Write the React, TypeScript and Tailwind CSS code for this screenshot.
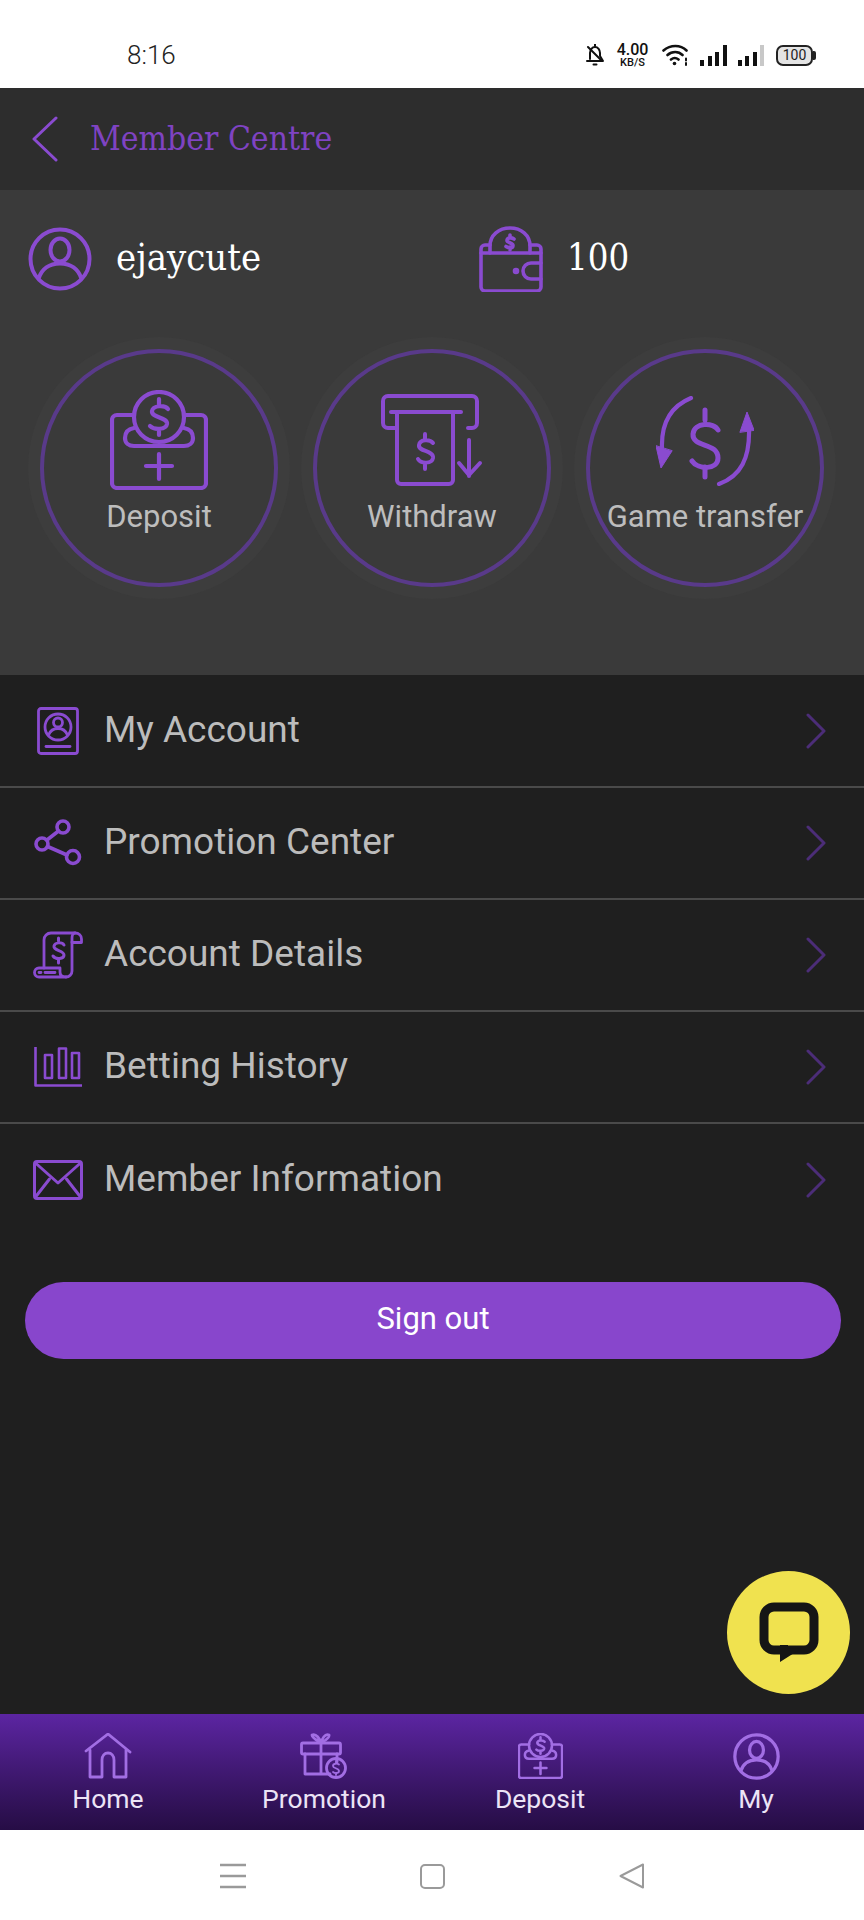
import React from "react";

const P = "#8a4bd0";
const S = { fill: "none", stroke: P, strokeWidth: 3, strokeLinecap: "round" as const, strokeLinejoin: "round" as const };

function Avatar({ size = 64, sw = 4, color = P }: { size?: number; sw?: number; color?: string }) {
  return (
    <svg width={size} height={size} viewBox="0 0 64 64" fill="none" stroke={color} strokeWidth={sw}>
      <circle cx="32" cy="32" r="29.5" />
      <ellipse cx="32" cy="23" rx="9.5" ry="11.5" />
      <path d="M10.5 52c3-10 11-15.5 21.5-15.5S50.5 42 53.5 52" />
    </svg>
  );
}

function Wallet() {
  return (
    <svg width="64" height="66" viewBox="0 0 64 66" {...S} strokeWidth={3.6}>
      <path d="M6 19h5M51 19h7a4 4 0 0 1 4 4v38a4 4 0 0 1-4 4H6a4 4 0 0 1-4-4V23a4 4 0 0 1 4-4" />
      <path d="M11 27V20C11 9 20 2 31 2s20 7 20 18v7" />
      <path d="M2 27h60" />
      <path d="M62 37H52a8 8 0 0 0 0 16h10" />
      <circle cx="37" cy="45" r="1.5" fill={P} />
      <path d="M35 13c-3-2-7-1-7 1.500s6 2 6 5-4 3-7 1M31 9v3M31 21v3" />
    </svg>
  );
}

function DepositIcon({ w = 98, h = 100, sw = 4.2, color = P }: { w?: number; h?: number; sw?: number; color?: string }) {
  return (
    <svg width={w} height={h} viewBox="0 0 98 100" {...S} stroke={color} strokeWidth={sw}>
      <path d="M24 25H7a5 5 0 0 0-5 5v63a5 5 0 0 0 5 5h84a5 5 0 0 0 5-5V30a5 5 0 0 0-5-5H74" />
      <circle cx="49" cy="27" r="25" />
      <path d="M24 38c-6 1-9 5-9 10 0 5 4 8 9 8h50c5 0 9-3 9-8 0-5-3-9-9-10" />
      <path d="M58 19c-3-4-15-4-16 2-1 7 16 6 15 13-1 6-13 6-17 2M49 9v5M49 39v6" />
      <path d="M49 64v25M36 76h26" />
    </svg>
  );
}

function WithdrawIcon() {
  return (
    <svg width="102" height="92" viewBox="0 0 102 92" {...S} strokeWidth={4}>
      <path d="M16 34H7a5 5 0 0 1-5-5V7a5 5 0 0 1 5-5h84a5 5 0 0 1 5 5v22a5 5 0 0 1-5 5h-4" />
      <path d="M10 18h70" />
      <path d="M16 18v68a4 4 0 0 0 4 4h48a4 4 0 0 0 4-4V18" />
      <path d="M52 49c-3-4-13-4-14 2-1 7 15 5 14 13-1 6-12 6-15 1M44 40v5M44 69v6" />
      <path d="M88 46v36M78 69l10 12 11-12" />
    </svg>
  );
}

function TransferIcon() {
  return (
    <svg width="98" height="90" viewBox="0 0 98 90" {...S} strokeWidth={4.2}>
      <path d="M35 2C18 9 5 24 6 52" />
      <path d="M0 50l5 22 11-17z" fill={P} strokeWidth={1} />
      <path d="M63 88c22-8 31-26 30-56" />
      <path d="M84 36l7-20 7 18z" fill={P} strokeWidth={1} />
      <path d="M62 34c-4-8-24-8-25 4-1 14 25 8 25 24 0 12-20 12-26 3" strokeWidth={5} />
      <path d="M49 14v10M49 71v10" strokeWidth={5} />
    </svg>
  );
}

function PassportIcon() {
  return (
    <svg width="42" height="48" viewBox="0 0 42 48" {...S} strokeWidth={2.8}>
      <rect x="1.500" y="1.500" width="39" height="45" rx="2.500" />
      <circle cx="21" cy="20" r="13" />
      <circle cx="21" cy="15.500" r="4.500" />
      <path d="M11.500 28c2-5 5.500-6.500 9.500-6.500s7.500 1.500 9.500 6.500" />
      <path d="M9 39.500h24" />
    </svg>
  );
}

function ShareIcon() {
  return (
    <svg width="48" height="48" viewBox="0 0 48 48" {...S} strokeWidth={3.6}>
      <circle cx="29" cy="8" r="6" />
      <circle cx="8" cy="25" r="6" />
      <circle cx="39" cy="38" r="6.500" />
      <path d="M24.500 12L13 21M13.500 27.500L33 36" />
    </svg>
  );
}

function ScrollIcon() {
  return (
    <svg width="50" height="48" viewBox="0 0 50 48" {...S} strokeWidth={2.8}>
      <path d="M11 37V9a7 7 0 0 1 7-7h24" />
      <path d="M42 2c4 0 6.500 2.500 6.500 6v3.500H39V7c0-3 1-5 3-5z" />
      <path d="M39 11v29a6 6 0 0 1-6 6" />
      <path d="M6 37h21v4c0 3 2 5 6 5H6a4.500 4.500 0 0 1 0-9z" />
      <path d="M6 41.500h2M12 41.500h10" />
      <path d="M31 14c-2-3-9-3-10 1-1 5 10 4 10 9 0 4-8 5-11 1M25.500 7v3M25.500 28v4" strokeWidth={3} />
    </svg>
  );
}

function BarsIcon() {
  return (
    <svg width="48" height="40" viewBox="0 0 48 40" {...S} strokeWidth={2.6} strokeLinecap="butt">
      <path d="M1.500 0v38.500H48" />
      <rect x="11" y="8" width="7" height="23" />
      <rect x="25" y="1.500" width="7" height="29.500" />
      <rect x="38" y="6" width="7" height="25" />
    </svg>
  );
}

function MailIcon() {
  return (
    <svg width="50" height="40" viewBox="0 0 50 40" {...S} strokeWidth={3}>
      <rect x="1.500" y="1.500" width="47" height="37" rx="2.500" />
      <path d="M2.500 3L25 23 47.500 3" />
      <path d="M2.500 37l14-18M47.500 37l-14-18" />
    </svg>
  );
}

function Chevron() {
  return (
    <svg width="22" height="36" viewBox="0 0 22 36" fill="none" stroke="#4c2d78" strokeWidth="3" strokeLinecap="round" strokeLinejoin="round">
      <path d="M3 2l16 16L3 34" />
    </svg>
  );
}

const NV = "#a26ee4";

function HomeIcon() {
  return (
    <svg width="48" height="46" viewBox="0 0 48 46" fill="none" stroke={NV} strokeWidth="2.800" strokeLinecap="round" strokeLinejoin="round">
      <path d="M2 18L24 1l22 18" />
      <path d="M6 17v27h12V27c0-4 2.500-7 6-7s6 3 6 7v17h12V17" />
    </svg>
  );
}

function GiftIcon() {
  return (
    <svg width="48" height="46" viewBox="0 0 48 46" fill="none" stroke={NV} strokeWidth="2.800" strokeLinecap="round" strokeLinejoin="round">
      <rect x="1.500" y="10" width="39" height="11" rx="1.500" />
      <path d="M5 21v20h25M37 21v8M21 10v31" />
      <path d="M21 10c-3-2-9-5-9-8 4-2 8 4 9 8zM21 10c3-2 9-5 8-8-4-2-7 4-8 8z" />
      <circle cx="36" cy="35" r="9.500" />
      <path d="M39 31.500c-2-1.500-6-1-6 1.500s6 2 6 5c0 2.500-4 2.500-6 1M36 28v2M36 40v2" strokeWidth="1.800" />
    </svg>
  );
}

function MenuNav() {
  return (
    <svg width="26" height="26" viewBox="0 0 26 26" fill="none" stroke="#9a9a9a" strokeWidth="2.400">
      <path d="M0 2h26M0 13h26M0 24h26" />
    </svg>
  );
}

function StatusIcons() {
  return (
    <div className="flex items-center h-[24px]">
      <svg width="20" height="22" viewBox="0 0 20 22" fill="none" stroke="#111" strokeWidth="2" strokeLinecap="round" strokeLinejoin="round">
        <path d="M5 15V9c0-3 2-6 5-6s5 3 5 6v3l3 5H2" />
        <path d="M10 0v2M3 3l14 14M8.500 20.500h3" />
      </svg>
      <div className="ml-[11px] w-[33px] flex flex-col items-center text-[#111] font-['Roboto',sans-serif] leading-none">
        <span className="text-[16px] leading-[14px] font-medium">4.00</span>
        <span className="text-[11px] leading-[11px] font-medium">KB/S</span>
      </div>
      <svg className="ml-[13px]" width="27" height="22" viewBox="0 0 27 22" fill="none" stroke="#111" strokeWidth="2.600" strokeLinecap="round">
        <path d="M1.500 6.500c7-6 17-6 23 0M5.500 11c4.500-4 11-4 15 0M9 15.500c2.500-2 5-2 7.500 0" />
        <circle cx="12.500" cy="19.500" r="1.800" fill="#111" stroke="none" />
        <path d="M24 14.500v2M24 19v2" strokeWidth="2" />
      </svg>
      <div className="ml-[11px] flex items-end gap-[3.500px] h-[21px]">
        <div className="w-[4px] h-[6px] bg-[#111]" />
        <div className="w-[4px] h-[10px] bg-[#111]" />
        <div className="w-[4px] h-[14px] bg-[#111]" />
        <div className="w-[4px] h-[21px] bg-[#111]" />
      </div>
      <div className="ml-[11px] flex items-end gap-[3.500px] h-[21px]">
        <div className="w-[4px] h-[6px] bg-[#111]" />
        <div className="w-[4px] h-[10px] bg-[#111]" />
        <div className="w-[4px] h-[14px] bg-[#111]" />
        <div className="w-[4px] h-[21px] bg-[#c8c8c8]" />
      </div>
      <div className="ml-[12px] flex items-center">
        <div className="w-[37px] h-[21px] rounded-[7px] border-2 border-[#222] bg-[#e4e4e4] flex items-center justify-center text-[14px] text-[#222] font-['Roboto',sans-serif] leading-none">
          100
        </div>
        <div className="w-[3px] h-[9px] bg-[#222] rounded-r-[2px]" />
      </div>
    </div>
  );
}

function Circle({ label, children, pb }: { label: string; children: React.ReactNode; pb: string }) {
  return (
    <div className="w-[262px] h-[262px] shrink-0 rounded-full bg-[#3d3d3d] p-[12px]">
      <div className="w-full h-full rounded-full bg-[#3a3a3a] border-[4px] border-[#593a8a] flex flex-col items-center">
        <div className={`h-[147px] flex items-end ${pb}`}>{children}</div>
        <div className="text-[31px] leading-[34px] text-[#bdbdbd] font-['Roboto',sans-serif] whitespace-nowrap">{label}</div>
      </div>
    </div>
  );
}

const rows: [string, React.ReactNode][] = [
  ["My Account", <PassportIcon />],
  ["Promotion Center", <ShareIcon />],
  ["Account Details", <ScrollIcon />],
  ["Betting History", <BarsIcon />],
  ["Member Information", <MailIcon />],
];

function Row({ label, icon, last }: { label: string; icon: React.ReactNode; last: boolean }) {
  return (
    <div className={`h-[112px] flex items-center pl-[33px] pr-[37px] ${last ? "" : "border-b-2 border-[#4a4a4a]"}`}>
      <div className="w-[50px] h-[50px] flex items-center justify-center">{icon}</div>
      <div className="ml-[21px] pb-[2px] flex-1 text-[37px] leading-[44px] text-[#bcbcbc] font-['Roboto',sans-serif]">{label}</div>
      <Chevron />
    </div>
  );
}

function NavItem({ label, children }: { label: string; children: React.ReactNode }) {
  return (
    <div className="flex-1 flex flex-col items-center">
      <div className="h-[46px] flex items-center justify-center">{children}</div>
      <div className="mt-[4px] text-[26.500px] leading-[32px] text-[#ece4f6] font-['Roboto',sans-serif]">{label}</div>
    </div>
  );
}

export default function App() {
  return (
    <div className="relative w-[864px] h-[1920px] flex flex-col bg-white overflow-hidden">
      <div className="h-[88px] shrink-0 bg-white flex items-center justify-between pl-[127px] pr-[48px] pt-[22px]">
        <div className="text-[26px] leading-[30px] text-[#222] font-['Roboto',sans-serif] font-light">8:16</div>
        <StatusIcons />
      </div>

      <div className="h-[102px] shrink-0 bg-[#2d2d2d] flex items-center pl-[32px]">
        <svg width="26" height="46" viewBox="0 0 26 46" fill="none" stroke={P} strokeWidth="3" strokeLinecap="round" strokeLinejoin="round">
          <path d="M24 2L2 23l22 21" />
        </svg>
        <div className="ml-[32px] text-[33px] leading-[40px] text-[#7f43c2] font-['DejaVu_Serif',serif] origin-left scale-x-[0.91] whitespace-nowrap">Member Centre</div>
      </div>

      <div className="h-[485px] shrink-0 bg-[#3a3a3a]">
        <div className="flex items-center pl-[28px] pt-[36px]">
          <div className="flex items-center w-[451px]">
            <Avatar />
            <div className="ml-[24px] mb-[2px] text-[37px] leading-[44px] text-white font-['DejaVu_Serif',serif] origin-left scale-x-[0.92]">ejaycute</div>
          </div>
          <Wallet />
          <div className="ml-[24px] mb-[2px] text-[37px] leading-[44px] text-white font-['DejaVu_Serif',serif] origin-left scale-x-[0.88]">100</div>
        </div>
        <div className="flex pl-[28px] gap-[11px] mt-[45px]">
          <Circle label="Deposit" pb="pb-[10px]"><DepositIcon /></Circle>
          <Circle label="Withdraw" pb="pb-[14px]"><WithdrawIcon /></Circle>
          <Circle label="Game transfer" pb="pb-[14px]"><TransferIcon /></Circle>
        </div>
      </div>

      <div className="flex-1 bg-[#1f1f1f] flex flex-col pt-[1px]">
        {rows.map(([label, icon], i) => (
          <Row key={label} label={label} icon={icon} last={i === rows.length - 1} />
        ))}
        <div className="ml-[25px] mr-[23px] mt-[46px] h-[77px] pb-[3px] rounded-full bg-[#8846cc] flex items-center justify-center text-[31px] text-white font-['Roboto',sans-serif]">
          Sign out
        </div>
      </div>

      <div className="h-[116px] shrink-0 pt-[19px] flex bg-gradient-to-b from-[#5c25a2] to-[#260d45]">
        <NavItem label="Home"><HomeIcon /></NavItem>
        <NavItem label="Promotion"><GiftIcon /></NavItem>
        <NavItem label="Deposit"><DepositIcon w={45} h={46} sw={5.5} color={NV} /></NavItem>
        <NavItem label="My"><Avatar size={47} sw={4.4} color={NV} /></NavItem>
      </div>

      <div className="h-[90px] shrink-0 bg-white flex items-start justify-center pt-[33px]">
        <div className="flex items-center gap-[174px]">
          <MenuNav />
          <div className="w-[25px] h-[25px] rounded-[5px] border-2 border-[#9a9a9a]" />
          <svg width="26" height="26" viewBox="0 0 26 26" fill="none" stroke="#9a9a9a" strokeWidth="2" strokeLinejoin="round">
            <path d="M24 1.500v23L1.500 13z" />
          </svg>
        </div>
      </div>

      <div className="absolute left-[727px] top-[1571px] w-[123px] h-[123px] rounded-full bg-[#f0e24f] flex items-center justify-center">
        <svg width="60" height="62" viewBox="0 0 60 62">
          <path d="M15 5h30a10 10 0 0 1 10 10v23a10 10 0 0 1-10 10H15A10 10 0 0 1 5 38V15A10 10 0 0 1 15 5z" fill="none" stroke="#151515" strokeWidth="9" />
          <path d="M21 43h8v4l14-1-22 14z" fill="#151515" />
        </svg>
      </div>
    </div>
  );
}
